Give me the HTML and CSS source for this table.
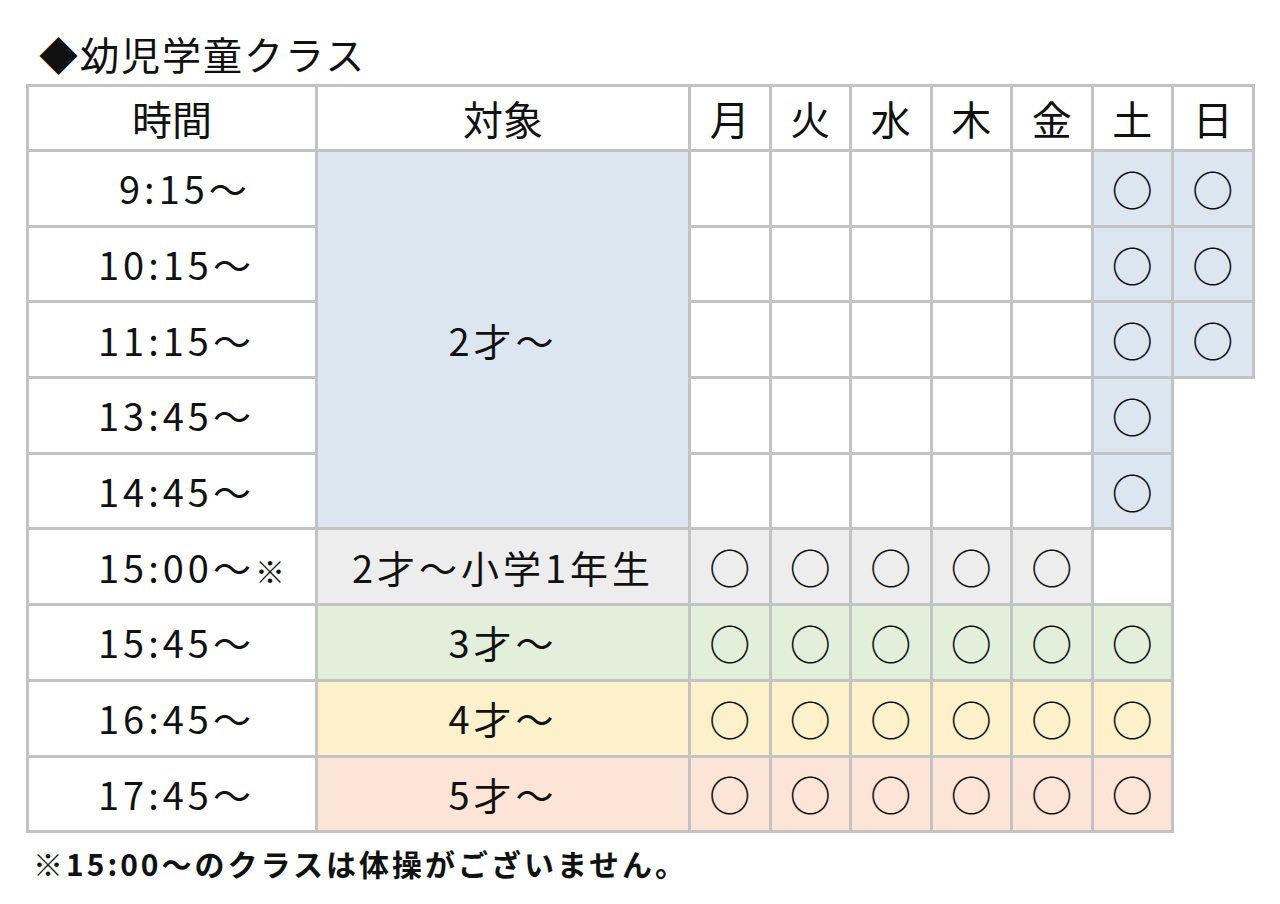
FILE: index.html
```html
<!DOCTYPE html>
<html lang="ja">
<head>
<meta charset="utf-8">
<title>幼児学童クラス</title>
<link rel="stylesheet" href="styles.css">
</head>
<body>
<div class="page">
  <h1 class="title">◆幼児学童クラス</h1>
  <table class="schedule">
    <colgroup>
      <col class="c-time"><col class="c-target">
      <col class="c-day"><col class="c-day"><col class="c-day"><col class="c-day"><col class="c-day"><col class="c-day"><col class="c-day">
    </colgroup>
    <thead>
      <tr class="head">
        <th>時間</th><th>対象</th>
        <th>月</th><th>火</th><th>水</th><th>木</th><th>金</th><th>土</th><th>日</th>
      </tr>
    </thead>
    <tbody>
      <tr>
        <td class="time indent">9:15～</td>
        <td class="target blue" rowspan="5">2才～</td>
        <td></td><td></td><td></td><td></td><td></td>
        <td class="blue mark">○</td><td class="blue mark">○</td>
      </tr>
      <tr>
        <td class="time">10:15～</td>
        <td></td><td></td><td></td><td></td><td></td>
        <td class="blue mark">○</td><td class="blue mark">○</td>
      </tr>
      <tr>
        <td class="time">11:15～</td>
        <td></td><td></td><td></td><td></td><td></td>
        <td class="blue mark">○</td><td class="blue mark">○</td>
      </tr>
      <tr>
        <td class="time">13:45～</td>
        <td></td><td></td><td></td><td></td><td></td>
        <td class="blue mark">○</td><td class="none"></td>
      </tr>
      <tr>
        <td class="time">14:45～</td>
        <td></td><td></td><td></td><td></td><td></td>
        <td class="blue mark">○</td><td class="none"></td>
      </tr>
      <tr>
        <td class="time">15:00～<span class="note-mark">※</span></td>
        <td class="target gray">2才～小学1年生</td>
        <td class="gray mark">○</td><td class="gray mark">○</td><td class="gray mark">○</td><td class="gray mark">○</td><td class="gray mark">○</td>
        <td></td><td class="none"></td>
      </tr>
      <tr>
        <td class="time">15:45～</td>
        <td class="target green">3才～</td>
        <td class="green mark">○</td><td class="green mark">○</td><td class="green mark">○</td><td class="green mark">○</td><td class="green mark">○</td><td class="green mark">○</td>
        <td class="none"></td>
      </tr>
      <tr>
        <td class="time">16:45～</td>
        <td class="target yellow">4才～</td>
        <td class="yellow mark">○</td><td class="yellow mark">○</td><td class="yellow mark">○</td><td class="yellow mark">○</td><td class="yellow mark">○</td><td class="yellow mark">○</td>
        <td class="none"></td>
      </tr>
      <tr>
        <td class="time">17:45～</td>
        <td class="target pink">5才～</td>
        <td class="pink mark">○</td><td class="pink mark">○</td><td class="pink mark">○</td><td class="pink mark">○</td><td class="pink mark">○</td><td class="pink mark">○</td>
        <td class="none"></td>
      </tr>
    </tbody>
  </table>
  <p class="footnote">※15:00～のクラスは体操がございません。</p>
</div>
</body>
</html>
```

FILE: styles.css
```css
html, body {
  margin: 0;
  padding: 0;
  background: #ffffff;
}

body {
  font-family: "Noto Sans CJK JP", "Noto Sans", sans-serif;
  color: #111111;
}

.page {
  padding: 28px 0 0 26px;
}

.title {
  margin: 0 0 0 13px;
  font-size: 39px;
  font-weight: 400;
  line-height: 50px;
  letter-spacing: 2px;
  height: 56px;
}

.schedule {
  border-collapse: collapse;
  table-layout: fixed;
  width: 1227px;
}

.c-time { width: 289px; }
.c-target { width: 373px; }
.c-day { width: 80.5px; }

.schedule th,
.schedule td {
  border: 3px solid #c3c3c3;
  padding: 0;
  text-align: center;
  vertical-align: middle;
  font-size: 38px;
  font-weight: 400;
  line-height: 1;
  background: #ffffff;
}

.schedule th {
  font-size: 40px;
}

.schedule .head {
  height: 65px;
}

.schedule tbody tr {
  height: 75.7px;
}

.schedule td.none {
  border: none;
  background: transparent;
}

.schedule td.time {
  text-align: left;
  padding-left: 69px;
  letter-spacing: 4px;
}

.schedule td.time.indent {
  padding-left: 90px;
}

.note-mark {
  font-size: 30px;
  letter-spacing: 0;
}

.schedule td.target {
  letter-spacing: 4px;
}

.schedule td.mark {
  font-size: 41px;
}

.schedule td.blue { background: #dce6f1; }
.schedule td.gray { background: #ededed; }
.schedule td.green { background: #e2efda; }
.schedule td.yellow { background: #fdf1cb; }
.schedule td.pink { background: #fce4d6; }

.footnote {
  margin: 10px 0 0 7px;
  font-size: 30px;
  font-weight: 700;
  line-height: 40px;
  letter-spacing: 3px;
}
```
